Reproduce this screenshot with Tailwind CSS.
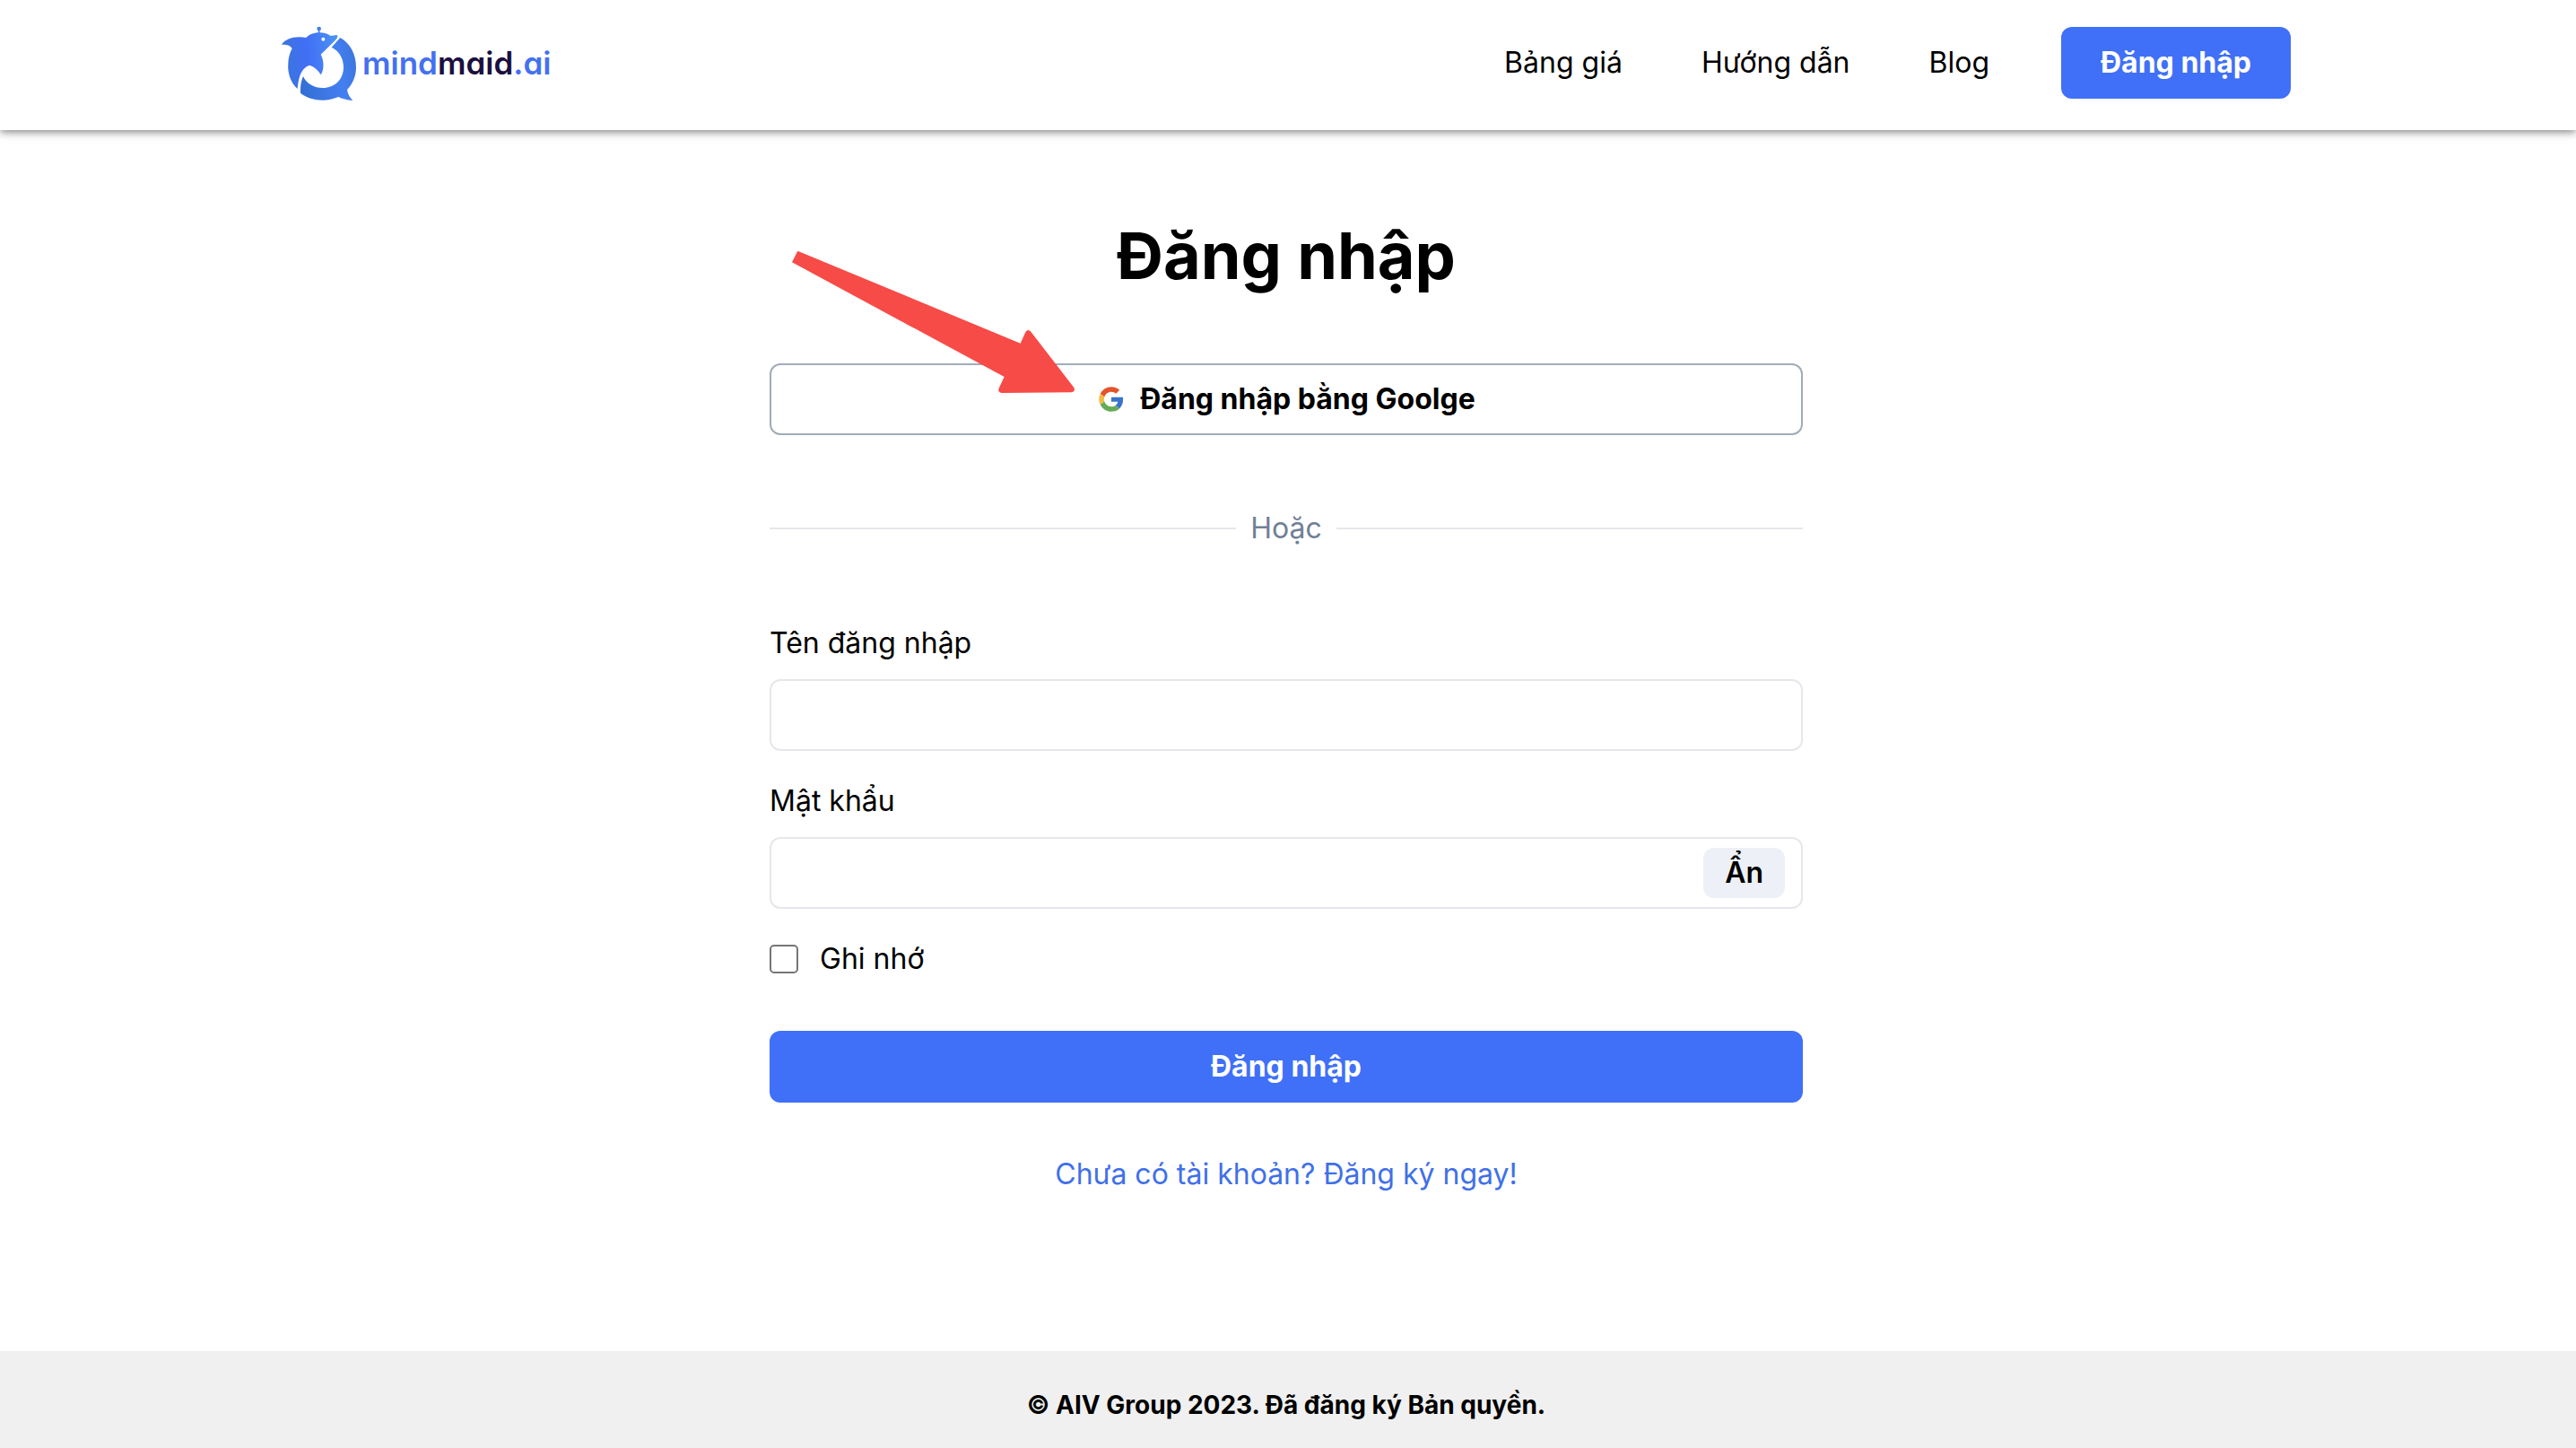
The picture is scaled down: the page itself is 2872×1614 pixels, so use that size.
<!DOCTYPE html>
<html lang="vi">
<head>
<meta charset="utf-8">
<meta name="viewport" content="width=device-width, initial-scale=1">
<title>Đăng nhập - mindmaid.ai</title>
<script src="https://cdn.jsdelivr.net/npm/@tailwindcss/browser@4"></script>
</head>
<body class="flex min-h-screen flex-col bg-white font-['Inter',sans-serif] text-[32px] leading-[48px] text-black">

<header class="pt-7 pr-1 pb-[33px] shadow-[0_1px_10px_rgba(0,0,0,0.6)]">
  <div class="mx-auto flex max-w-[2240px] items-center justify-between">
    <a href="#" class="flex items-center gap-1.5" aria-label="mindmaid.ai">
      <svg class="size-[84px]" viewBox="72 54 252 252" aria-hidden="true">
        <defs>
          <linearGradient id="body" x1="0" y1="0.3" x2="1" y2="0.2">
            <stop offset="0" stop-color="#3b76dc"/>
            <stop offset="0.45" stop-color="#416ef6"/>
            <stop offset="1" stop-color="#4b93f3"/>
          </linearGradient>
          <linearGradient id="ring" x1="0" y1="0.6" x2="1" y2="0.4">
            <stop offset="0" stop-color="#356fd6"/>
            <stop offset="0.7" stop-color="#447ff2"/>
            <stop offset="1" stop-color="#3d76dc"/>
          </linearGradient>
        </defs>
        <path fill="url(#body)" d="M72 120C84 98 118 90 154 96C166 84 184 79 198 79C214 79 228 84 236 90L256 87C262 90 259 97 252 104L203 152C215 175 214 205 203 220C195 205 182 194 166 188C143 194 129 218 125 267C102 247 91 212 94 182C95 160 100 146 107 132C100 122 88 118 72 120Z"/>
        <path fill="url(#ring)" d="M268 96C301 115 321 150 321 195C321 225 310 250 291 270C293 285 300 296 310 306C290 305 275 300 262 294C220 312 170 308 135 281C134 260 137 240 144 225C155 250 180 264 210 264C250 264 279 235 279 195C279 165 264 140 239 128Z"/>
        <circle cx="197" cy="66" r="7" fill="#4280e8"/>
        <path d="M197 70V82" stroke="#4280e8" stroke-width="5"/>
        <circle cx="211" cy="101" r="6" fill="#fff"/>
      </svg>
      <span class="text-[35px] font-semibold text-[#4471f0] [font-feature-settings:'cv11']">mind<span class="text-[#1b103f]">maid</span>.ai</span>
    </a>
    <nav class="flex items-center gap-20">
      <div class="flex gap-[88px]">
        <a href="#">Bảng giá</a>
        <a href="#">Hướng dẫn</a>
        <a href="#">Blog</a>
      </div>
      <a href="#" class="flex h-20 items-center rounded-xl bg-[#4070f7] px-11 font-bold text-white">Đăng nhập</a>
    </nav>
  </div>
</header>

<main class="flex-1 pt-[92px] pr-1">
  <form class="mx-auto max-w-6xl">
    <h1 class="text-center text-[72px] leading-[96px] font-bold">Đăng nhập</h1>

    <div class="relative mt-[72px]">
      <button type="button" class="flex h-20 w-full items-center justify-center gap-4 rounded-xl border-2 border-[#a2acb9] font-bold">
        <svg class="size-8" viewBox="-4 -4 56 56" aria-hidden="true">
          <path fill="#e5532b" d="M24 9.5c3.54 0 6.71 1.22 9.21 3.6l6.85-6.85C35.9 2.38 30.47 0 24 0 14.62 0 6.51 5.38 2.56 13.22l7.98 6.19C12.43 13.72 17.74 9.5 24 9.5z"/>
          <path fill="#3a72cc" d="M46.98 24.55c0-1.57-.15-3.09-.38-4.55H24v9.02h12.94c-.58 2.96-2.26 5.48-4.78 7.18l7.73 6c4.51-4.18 7.09-10.36 7.09-17.65z"/>
          <path fill="#f2bb44" d="M10.53 28.59c-.48-1.45-.76-2.99-.76-4.59s.27-3.14.76-4.59l-7.98-6.19C.92 16.46 0 20.12 0 24c0 3.88.92 7.54 2.56 10.78l7.97-6.19z"/>
          <path fill="#66ab56" d="M24 48c6.48 0 11.93-2.13 15.89-5.81l-7.73-6c-2.15 1.45-4.92 2.3-8.16 2.3-6.26 0-11.57-4.22-13.47-9.91l-7.98 6.19C6.51 42.62 14.62 48 24 48z"/>
        </svg>
        Đăng nhập bằng Goolge
      </button>
      <svg class="pointer-events-none absolute -top-[126px] left-[25px] h-40 w-[316px]" viewBox="69 57 948 480" aria-hidden="true">
        <path fill="#f74b47" d="M88 59L833 368L850 331Q858 318 868 329L1012 516Q1018 529 1004 532L770 534Q756 531 761 518L779 480L69 97Z"/>
      </svg>
    </div>

    <div class="my-20 flex items-center gap-4 text-[#718096]">
      <div class="h-0.5 flex-1 bg-[#e5e7eb]"></div>
      <span>Hoặc</span>
      <div class="h-0.5 flex-1 bg-[#e5e7eb]"></div>
    </div>

    <div class="flex flex-col gap-8">
      <div class="flex flex-col gap-4">
        <label for="username">Tên đăng nhập</label>
        <input id="username" type="text" class="h-20 w-full rounded-xl border-2 border-[#e5e7eb] px-8">
      </div>
      <div class="flex flex-col gap-4">
        <label for="password">Mật khẩu</label>
        <div class="flex h-20 items-center rounded-xl border-2 border-[#e5e7eb] pr-[18px]">
          <input id="password" type="password" class="h-full min-w-0 flex-1 px-8">
          <button type="button" class="flex h-14 items-center rounded-xl bg-[#edf0f6] px-6 font-semibold">Ẩn</button>
        </div>
      </div>
      <label class="flex items-center gap-6">
        <input type="checkbox" class="size-8 appearance-none rounded-[5px] border-2 border-[#767676]">
        Ghi nhớ
      </label>
    </div>

    <button type="submit" class="mt-14 h-20 w-full rounded-xl bg-[#4070f7] font-bold text-white">Đăng nhập</button>
    <p class="mt-14 text-center"><a href="#" class="text-[#4070e8]">Chưa có tài khoản? Đăng ký ngay!</a></p>
  </form>
</main>

<footer class="bg-[#f0f0f0] pt-10 pr-1 pb-7 text-center text-[28px] leading-10 font-bold">© AIV Group 2023. Đã đăng ký Bản quyền.</footer>

</body>
</html>
